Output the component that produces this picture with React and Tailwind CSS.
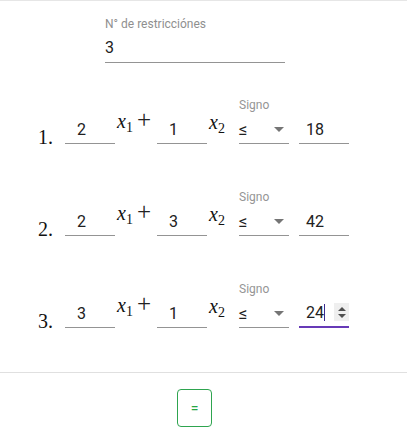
import React from "react";

const rows = [
  { n: 1, a: "2", b: "1", r: "18" },
  { n: 2, a: "2", b: "3", r: "42" },
  { n: 3, a: "3", b: "1", r: "24", focus: true },
];

function Var({ sub, plus }) {
  return (
    <span className="flex items-baseline leading-none text-[20px] text-[#111]" style={{ fontFamily: '"Liberation Serif", serif' }}>
      <i>x</i>
      <span className="relative top-[4px] text-[14px]">{sub}</span>
      {plus && <span className="ml-[4px] text-[25px] font-light text-[#222]">+</span>}
    </span>
  );
}

function Row({ row }) {
  return (
    <div className="flex items-end h-[47px] pl-[38px] text-[#212121]">
      <span
        className="w-[27px] text-[20px] leading-none mb-[-3px] text-[#111]"
        style={{ fontFamily: '"Liberation Serif", serif' }}
      >
        {row.n}.
      </span>
      <div className="w-[50px] h-[31px] border-b border-[#949494] pt-[2px] pl-[12px] flex items-center text-[16px] leading-[19px]">
        {row.a}
      </div>
      <div className="w-[42px] pl-[2px] mb-[12px]">
        <Var sub="1" plus />
      </div>
      <div className="w-[50px] h-[31px] border-b border-[#949494] pt-[2px] pl-[12px] flex items-center text-[16px] leading-[19px]">
        {row.b}
      </div>
      <div className="w-[32px] pl-[2px] mb-[12px]">
        <Var sub="2" />
      </div>
      <div className="w-[50px] flex flex-col">
        <span className="text-[12px] leading-[16px] text-[#959595]">Signo</span>
        <div className="h-[31px] border-b border-[#949494] pt-[2px] flex items-center text-[17px] leading-[19px]">
          <span>≤</span>
          <span className="ml-auto mr-[5px] w-0 h-0 border-l-[5px] border-r-[5px] border-t-[5px] border-l-transparent border-r-transparent border-t-[#757575]"></span>
        </div>
      </div>
      {row.focus ? (
        <div className="ml-[10px] w-[50px] h-[31px] border-b-2 border-[#673ab7] pt-[1px] pl-[7px] flex items-center text-[16px] leading-[19px]">
          <span>{row.r}</span>
          <span className="w-px h-[17px] bg-[#3b2a8f]"></span>
          <span className="ml-auto w-[15px] h-[18px] bg-[#efefef] flex flex-col items-center justify-center gap-[3px]">
            <span className="w-0 h-0 border-l-[4px] border-r-[4px] border-b-[4px] border-l-transparent border-r-transparent border-b-[#505050]"></span>
            <span className="w-0 h-0 border-l-[4px] border-r-[4px] border-t-[4px] border-l-transparent border-r-transparent border-t-[#505050]"></span>
          </span>
        </div>
      ) : (
        <div className="ml-[10px] w-[50px] h-[31px] border-b border-[#949494] pt-[2px] pl-[7px] flex items-center text-[16px] leading-[19px]">
          {row.r}
        </div>
      )}
    </div>
  );
}

export default function App() {
  return (
    <div
      className="w-[407px] h-[439px] bg-white border-t border-[#e6e6e6] overflow-hidden"
      style={{ fontFamily: 'Roboto, "Liberation Sans", sans-serif' }}
    >
      <div className="w-[389px] pt-[15px]">
        <div className="ml-[105px] w-[180px] flex flex-col">
          <span className="text-[12px] leading-[16px] text-[#8f8f8f]">N° de restricciónes</span>
          <div className="h-[31px] border-b border-[#949494] flex items-center text-[16px] leading-[19px] text-[#212121]">
            3
          </div>
        </div>
        <div className="mt-[34px] flex flex-col gap-[45px]">
          {rows.map((r) => (
            <Row key={r.n} row={r} />
          ))}
        </div>
      </div>
      <div className="mt-[44px] border-t border-[#e0e0e0]"></div>
      <div className="w-[389px] mt-[16px] flex justify-center">
        <button className="w-[35px] h-[38px] border border-[#2ea44f] rounded-[4px] text-[#28a745] text-[14px] flex items-center justify-center bg-white">
          =
        </button>
      </div>
    </div>
  );
}
